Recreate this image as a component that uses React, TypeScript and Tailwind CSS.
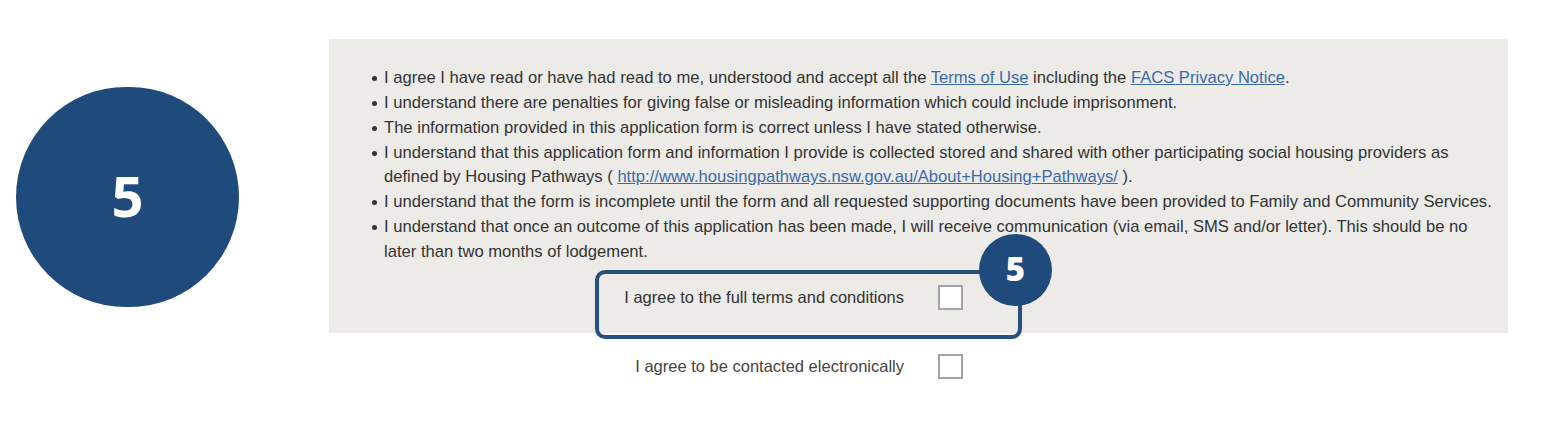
import React from 'react';

const TERMS = [
  <>
    I agree I have read or have had read to me, understood and accept all the{' '}
    <a href="#" className="text-[#3c6aa8] underline">Terms of Use</a> including the{' '}
    <a href="#" className="text-[#3c6aa8] underline">FACS Privacy Notice</a>.
  </>,
  <>I understand there are penalties for giving false or misleading information which could include imprisonment.</>,
  <>The information provided in this application form is correct unless I have stated otherwise.</>,
  <>
    I understand that this application form and information I provide is collected stored and shared with other participating social housing providers as
    <br />
    defined by Housing Pathways ({' '}
    <a href="#" className="text-[#3c6aa8] underline">http://www.housingpathways.nsw.gov.au/About+Housing+Pathways/</a> ).
  </>,
  <>I understand that the form is incomplete until the form and all requested supporting documents have been provided to Family and Community Services.</>,
  <>
    I understand that once an outcome of this application has been made, I will receive communication (via email, SMS and/or letter). This should be no
    <br />
    later than two months of lodgement.
  </>,
];

function Checkbox() {
  return <div className="w-[25px] h-[25px] bg-white border-2 border-[#a3a3a3] shrink-0" />;
}

export default function App() {
  return (
    <div className="flex w-[1554px] h-[431px] bg-white font-['Liberation_Sans',Arial,sans-serif] text-[#333]">
      <div className="w-[329px] shrink-0">
        <div className="ml-[16px] mt-[87px] w-[223px] h-[220px] rounded-full bg-[#1f4a7c] flex items-center justify-center">
          <span className="font-['Open_Sans',sans-serif] font-bold text-[56px] leading-none text-white pb-[4px]">5</span>
        </div>
      </div>

      <div className="w-[1179px] flex flex-col">
        <div className="mt-[39px] h-[294px] bg-[#ecebe7] pt-[27px]">
          <ul className="pl-[43px] text-[16.6px] leading-[24.86px] whitespace-nowrap">
            {TERMS.map((t, i) => (
              <li key={i} className="flex">
                <span className="w-[12px] shrink-0 flex h-[24.86px] items-center">
                  <span className="w-[5px] h-[5px] rounded-full bg-[#333]" />
                </span>
                <span>{t}</span>
              </li>
            ))}
          </ul>

          <div className="relative ml-[275px] mt-[20px] flex items-center h-[25px]">
            <div className="absolute left-[-9px] top-[-15px] w-[427px] h-[69px] border-4 border-[#28507f] rounded-[10px]" />
            <span className="w-[300px] text-right text-[16.5px] text-[#333]">I agree to the full terms and conditions</span>
            <div className="ml-[34px]"><Checkbox /></div>
            <div className="absolute left-[375px] top-[-51px] w-[73px] h-[72px] rounded-full bg-[#1f4a7c] flex items-center justify-center">
              <span className="font-['Open_Sans',sans-serif] font-extrabold text-[33px] leading-none text-white pb-[3px]">5</span>
            </div>
          </div>
        </div>

        <div className="ml-[275px] mt-[21px] flex items-center h-[25px]">
          <span className="w-[300px] text-right text-[16.5px] text-[#444]">I agree to be contacted electronically</span>
          <div className="ml-[34px]"><Checkbox /></div>
        </div>
      </div>
    </div>
  );
}
